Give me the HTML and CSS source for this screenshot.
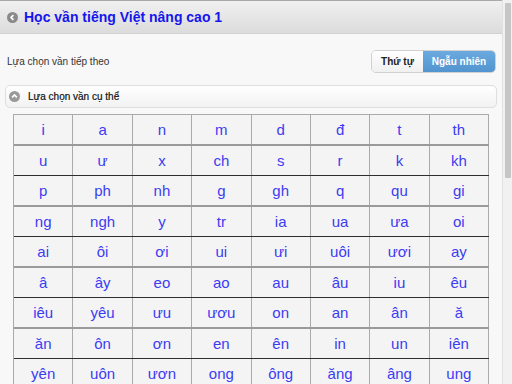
FILE: index.html
```html
<!DOCTYPE html>
<html lang="vi">
<head>
    <meta charset="UTF-8">
    <meta name="viewport" content="width=device-width, initial-scale=1.0">
    <title>Học vần tiếng Việt nâng cao 1</title>
    <link rel="stylesheet" href="styles.css">
</head>
<body>
    <div class="page">
        <header class="topbar">
            <span class="round-icon back-icon">
                <svg viewBox="0 0 12 12" width="11" height="11"><circle cx="6" cy="6" r="6" fill="#8a8a8a"/><path d="M7 3.4 L4.4 6 L7 8.6" fill="none" stroke="#fff" stroke-width="1.8"/></svg>
            </span>
            <h1>Học vần tiếng Việt nâng cao 1</h1>
        </header>

        <div class="content">
            <div class="option-row">
                <span class="option-label">Lựa chọn vần tiếp theo</span>
                <div class="segmented">
                    <button class="seg-btn">Thứ tự</button>
                    <button class="seg-btn active">Ngẫu nhiên</button>
                </div>
            </div>

            <div class="collapsible">
                <span class="round-icon">
                    <svg viewBox="0 0 12 12" width="11" height="11"><circle cx="6" cy="6" r="6" fill="#9a9a9a"/><path d="M3.4 7 L6 4.4 L8.6 7" fill="none" stroke="#fff" stroke-width="1.8"/></svg>
                </span>
                Lựa chọn vần cụ thể
            </div>

            <div class="letters" id="letters"></div>
        </div>
    </div>

    <div class="scrollbar"><div class="thumb"></div></div>

    <script>
        // bảng vần
        const rows = [
            ['i', 'a', 'n', 'm', 'd', 'đ', 't', 'th'],
            ['u', 'ư', 'x', 'ch', 's', 'r', 'k', 'kh'],
            ['p', 'ph', 'nh', 'g', 'gh', 'q', 'qu', 'gi'],
            ['ng', 'ngh', 'y', 'tr', 'ia', 'ua', 'ưa', 'oi'],
            ['ai', 'ôi', 'ơi', 'ui', 'ưi', 'uôi', 'ươi', 'ay'],
            ['â', 'ây', 'eo', 'ao', 'au', 'âu', 'iu', 'êu'],
            ['iêu', 'yêu', 'ưu', 'ươu', 'on', 'an', 'ân', 'ă'],
            ['ăn', 'ôn', 'ơn', 'en', 'ên', 'in', 'un', 'iên'],
            ['yên', 'uôn', 'ươn', 'ong', 'ông', 'ăng', 'âng', 'ung']
        ];

        document.getElementById('letters').innerHTML = rows.map(row => `
            <div class="letter-row">
                ${row.map(v => `<div class="cell">${v}</div>`).join('')}
            </div>
        `).join('');
    </script>
</body>
</html>
```

FILE: styles.css
```css
body {
    margin: 0;
    height: 384px;
    overflow: hidden;
    display: flex;
    background: #f8f8f8;
    font-family: 'Liberation Sans', Arial, sans-serif;
}

.page {
    flex: 1;
    border-top: 1px solid #a9a9a9;
}

.topbar {
    height: 32px;
    display: flex;
    align-items: center;
    padding-left: 7px;
    gap: 6px;
    background: linear-gradient(#f0f0f0, #dcdcdc);
    border-bottom: 1px solid #d2d2d2;
}

.topbar h1 {
    margin: 0;
    font-size: 14px;
    font-weight: bold;
    color: #1616ec;
}

.round-icon {
    display: flex;
}

.content {
    padding-top: 16px;
}

.option-row {
    display: flex;
    align-items: center;
    justify-content: space-between;
    padding: 0 6px 0 7px;
}

.option-label {
    font-size: 10px;
    color: #333;
}

.segmented {
    display: flex;
    height: 23px;
    border-radius: 5px;
    overflow: hidden;
    border: 1px solid #d0d0d0;
    box-sizing: border-box;
}

.seg-btn {
    border: none;
    margin: 0;
    padding: 0;
    font-family: 'Liberation Sans', Arial, sans-serif;
    font-size: 10px;
    font-weight: bold;
    background: linear-gradient(#ffffff, #f0f0f0);
    color: #222;
    width: 51px;
}

.seg-btn.active {
    width: 72px;
    background: linear-gradient(#6aaae0, #5294ce);
    color: #fff;
}

.collapsible {
    margin: 12px 5px 6px;
    height: 23px;
    box-sizing: border-box;
    border: 1px solid #dedede;
    border-radius: 5px;
    background: linear-gradient(#ffffff, #f2f2f2);
    display: flex;
    align-items: center;
    gap: 8px;
    padding-left: 3px;
    font-size: 10px;
    color: #111;
    -webkit-text-stroke: 0.2px #111;
}

.letters {
    margin: 0 13px;
    border-top: 1px solid #aaa;
    border-left: 1px solid #aaa;
}

.letter-row {
    display: grid;
    grid-template-columns: repeat(8, 1fr);
    height: 30.5px;
    box-sizing: border-box;
    border-bottom: 1px solid #2e2e2e;
}

.letter-row:nth-child(odd) {
    border-bottom: 2px solid #9a9a9a;
}

.cell {
    display: flex;
    align-items: center;
    justify-content: center;
    border-right: 1px solid #aaa;
    background: #f4f4f4;
    font-size: 15px;
    color: #3c3cf2;
}

.scrollbar {
    width: 10px;
    box-sizing: border-box;
    border-left: 1px solid #e2e2e2;
    background: #f1f1f1;
    padding: 3px 1px 0 2px;
}

.thumb {
    height: 175px;
    background: #c6c6c6;
    border-radius: 1px;
}
```
